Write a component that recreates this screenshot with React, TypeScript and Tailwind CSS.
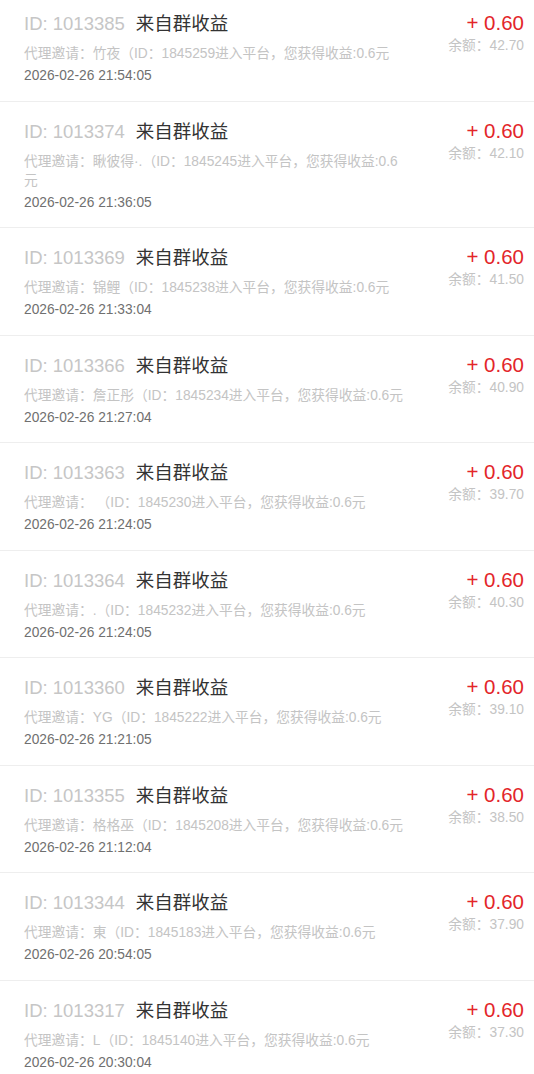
import React from "react";

type Item = { id: string; name: string; uid: string; time: string; balance: string };

const items: Item[] = [
  { id: "1013385", name: "竹夜", uid: "1845259", time: "2026-02-26 21:54:05", balance: "42.70" },
  { id: "1013374", name: "瞅彼得·.", uid: "1845245", time: "2026-02-26 21:36:05", balance: "42.10" },
  { id: "1013369", name: "锦鲤", uid: "1845238", time: "2026-02-26 21:33:04", balance: "41.50" },
  { id: "1013366", name: "詹正彤", uid: "1845234", time: "2026-02-26 21:27:04", balance: "40.90" },
  { id: "1013363", name: " ", uid: "1845230", time: "2026-02-26 21:24:05", balance: "39.70" },
  { id: "1013364", name: ".", uid: "1845232", time: "2026-02-26 21:24:05", balance: "40.30" },
  { id: "1013360", name: "YG", uid: "1845222", time: "2026-02-26 21:21:05", balance: "39.10" },
  { id: "1013355", name: "格格巫", uid: "1845208", time: "2026-02-26 21:12:04", balance: "38.50" },
  { id: "1013344", name: "東", uid: "1845183", time: "2026-02-26 20:54:05", balance: "37.90" },
  { id: "1013317", name: "L", uid: "1845140", time: "2026-02-26 20:30:04", balance: "37.30" },
];

export default function App() {
  return (
    <div
      className="w-[534px] h-[1074px] overflow-hidden bg-white"
      style={{ fontFamily: '"Liberation Sans", "Noto Sans CJK SC", sans-serif' }}
    >
      <div className="-mt-[6px]">
        {items.map((it) => (
          <div
            key={it.id}
            className="flex pl-[24px] pr-[10px] pt-[18px] pb-[15.5px] border-b border-[#eeeeee]"
          >
            <div className="w-[382px] shrink-0 min-w-0">
              <div className="flex items-center h-[24px] text-[18.5px] leading-[24px] whitespace-nowrap">
                <span className="text-[#c6c6c6]">ID: {it.id}</span>
                <span className="ml-[11px] text-[#333333]">来自群收益</span>
              </div>
              <div className="mt-[8px] text-[13.75px] leading-[19px] text-[#c4c4c4] break-all">
                代理邀请：{it.name}（ID：{it.uid}进入平台，您获得收益:0.6元
              </div>
              <div className="mt-[3px] text-[13.75px] leading-[19px] text-[#707070]">{it.time}</div>
            </div>
            <div className="flex-1 text-right">
              <div className="text-[20.5px] leading-[22px] text-[#e3262a]">+ 0.60</div>
              <div className="mt-[2px] text-[13.75px] leading-[19px] text-[#c4c4c4] whitespace-nowrap">
                余额：{it.balance}
              </div>
            </div>
          </div>
        ))}
      </div>
    </div>
  );
}
